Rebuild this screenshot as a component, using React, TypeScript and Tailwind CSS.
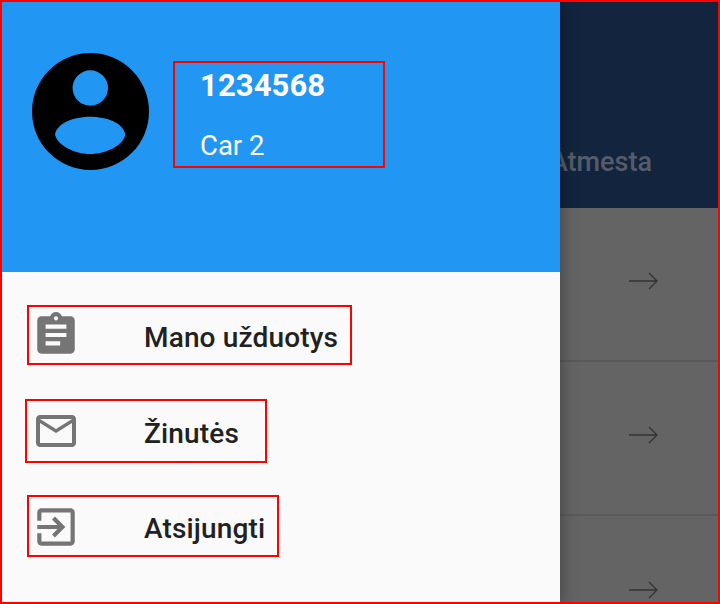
import type { ReactNode } from "react";

const roboto = "font-['Roboto',sans-serif]";

function ArrowIcon() {
  return (
    <svg width="30" height="18" viewBox="0 0 30 18" fill="none" stroke="#333333" strokeWidth="1.3">
      <path d="M1 9h28M21 1l8 8-8 8" />
    </svg>
  );
}

function BackdropRow({ last }: { last?: boolean }) {
  return (
    <div
      className={`flex h-[154px] items-center justify-end pr-[62px] pb-[6px] ${
        last ? "" : "border-b-2 border-[#595959]"
      }`}
    >
      <ArrowIcon />
    </div>
  );
}

function AvatarIcon() {
  return (
    <svg width="117" height="117" viewBox="0 0 117 117" className="shrink-0">
      <path
        fillRule="evenodd"
        fill="#000000"
        d="M58.500 0a58.500 58.500 0 1 0 0 117a58.500 58.500 0 1 0 0-117zM58.300 17.300a17.700 17.700 0 1 1 0 35.400a17.700 17.700 0 1 1 0-35.400zM23 81.500C25 70 42 63.700 58.300 63.700S91.500 70 93.400 81.500C91 92.500 74 101 58.300 101S25.500 92.500 23 81.500z"
      />
    </svg>
  );
}

function MaterialIcon({ d, size, className }: { d: string; size: number; className?: string }) {
  return (
    <svg width={size} height={size} viewBox="0 0 24 24" fill="#757575" className={`shrink-0 ${className ?? ""}`}>
      <path d={d} />
    </svg>
  );
}

function MenuItem({
  icon,
  label,
  className,
}: {
  icon: ReactNode;
  label: string;
  className: string;
}) {
  return (
    <div className={`flex items-center border-2 border-[#ff0000] ${className}`}>
      {icon}
      <span className="pt-[5px] text-[28px] leading-none font-medium tracking-[0.15px] text-[#212121]">
        {label}
      </span>
    </div>
  );
}

export default function App() {
  return (
    <div className={`relative h-[604px] w-[720px] overflow-hidden bg-[#646464] ${roboto}`}>
      <div className="flex flex-col">
        <div className="flex h-[208px] items-end justify-end bg-[#13243e] pr-[68px] pb-[32px]">
          <span className="text-[27px] leading-none font-medium text-[#555c69]">Atmesta</span>
        </div>
        <BackdropRow />
        <BackdropRow />
        <BackdropRow last />
      </div>

      <aside className="absolute inset-y-0 left-0 flex w-[560px] flex-col bg-[#fafafa] shadow-[2px_0_14px_rgba(0,0,0,0.3)]">
        <div className="flex h-[272px] items-start bg-[#2196f3] pt-[53px] pl-[32px]">
          <AvatarIcon />
          <div className="mt-[8px] ml-[24px] flex h-[107px] w-[212px] flex-col border-2 border-[#ff0000] pt-[5px] pl-[25px] text-white">
            <span className="text-[31px] leading-[36px] font-bold tracking-[0.1px]">1234568</span>
            <span className="mt-[26px] text-[27.500px] leading-[32px]">Car 2</span>
          </div>
        </div>
        <div className="flex flex-col items-start">
          <MenuItem
            className="mt-[33px] ml-[27px] h-[60px] w-[325px] gap-[63px] pl-[2px]"
            label="Mano užduotys"
            icon={
              <MaterialIcon
                size={50}
                d="M19 3h-4.180C14.400 1.840 13.300 1 12 1c-1.300 0-2.400.840-2.820 2H5c-1.100 0-2 .900-2 2v14c0 1.100.900 2 2 2h14c1.100 0 2-.900 2-2V5c0-1.100-.900-2-2-2zm-7 0c.550 0 1 .450 1 1s-.450 1-1 1-1-.450-1-1 .450-1 1-1zm2 14H7v-2h7v2zm3-4H7v-2h10v2zm0-4H7V7h10v2z"
              />
            }
          />
          <MenuItem
            className="mt-[34px] ml-[25px] h-[64px] w-[242px] gap-[64px] pl-[5px]"
            label="Žinutės"
            icon={
              <MaterialIcon
                size={48}
                d="M20 4H4c-1.100 0-1.990.900-1.990 2L2 18c0 1.100.900 2 2 2h16c1.100 0 2-.900 2-2V6c0-1.100-.900-2-2-2zm0 14H4V8l8 5 8-5v10zm-8-7L4 6h16l-8 5z"
              />
            }
          />
          <MenuItem
            className="mt-[32px] ml-[27px] h-[62px] w-[252px] gap-[63px] pl-[2px]"
            label="Atsijungti"
            icon={
              <MaterialIcon
                size={50}
                className="mt-[2px]"
                d="M10.090 15.590L11.500 17l5-5-5-5-1.410 1.410L12.670 11H3v2h9.670l-2.580 2.590zM19 3H5c-1.110 0-2 .900-2 2v4h2V5h14v14H5v-4H3v4c0 1.100.890 2 2 2h14c1.100 0 2-.900 2-2V5c0-1.100-.900-2-2-2z"
              />
            }
          />
        </div>
      </aside>

      <div className="pointer-events-none absolute inset-0 border-2 border-[#ff0000]" />
    </div>
  );
}
